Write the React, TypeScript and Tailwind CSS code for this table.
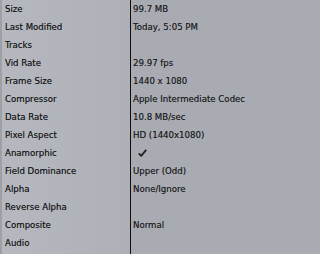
const rows: { label: string; value?: string; check?: boolean }[] = [
  { label: "Size", value: "99.7 MB" },
  { label: "Last Modified", value: "Today, 5:05 PM" },
  { label: "Tracks" },
  { label: "Vid Rate", value: "29.97 fps" },
  { label: "Frame Size", value: "1440 x 1080" },
  { label: "Compressor", value: "Apple Intermediate Codec" },
  { label: "Data Rate", value: "10.8 MB/sec" },
  { label: "Pixel Aspect", value: "HD (1440x1080)" },
  { label: "Anamorphic", check: true },
  { label: "Field Dominance", value: "Upper (Odd)" },
  { label: "Alpha", value: "None/Ignore" },
  { label: "Reverse Alpha" },
  { label: "Composite", value: "Normal" },
  { label: "Audio" },
];

function Check() {
  return (
    <svg width="9" height="8" viewBox="0 0 9 8" className="ml-[5px]">
      <path
        d="M0.8 4.4 L3.2 6.9 L8.2 0.9"
        fill="none"
        stroke="#222"
        strokeWidth="1.8"
        strokeLinejoin="round"
      />
    </svg>
  );
}

export default function App() {
  return (
    <div
      className="flex h-[254px] w-[320px] overflow-hidden bg-[#a8abb2] text-[8.6px] text-[#161616] [text-shadow:0_0_0.3px_rgba(0,0,0,0.5)]"
      style={{ fontFamily: '"DejaVu Sans", sans-serif' }}
    >
      {/* Label column */}
      <div className="flex w-[130px] shrink-0 flex-col border-l-2 border-[#9da0a7] bg-gradient-to-r from-[#b5b8bf] to-[#adb0b7]">
        {rows.map((r) => (
          <div key={r.label} className="flex h-[18px] items-center pl-[3px]">
            {r.label}
          </div>
        ))}
      </div>

      {/* Divider */}
      <div className="w-px shrink-0 bg-[#0e0e0e]" />

      {/* Value column */}
      <div className="flex flex-1 flex-col text-[#1e1e1e]">
        {rows.map((r) => (
          <div key={r.label} className="flex h-[18px] items-center pl-[2px]">
            {r.check ? <Check /> : r.value}
          </div>
        ))}
      </div>
    </div>
  );
}
